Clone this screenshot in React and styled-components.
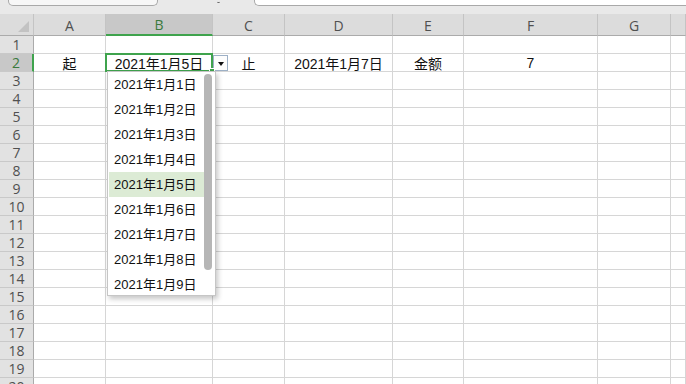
import React from 'react'
import styled, { createGlobalStyle } from 'styled-components'

const Global = createGlobalStyle`
  html, body { margin: 0; padding: 0; background: #fff; }
  body { font-family: "Liberation Sans", "Noto Sans CJK SC", sans-serif; }
`

const Page = styled.div`
  width: 686px;
  height: 384px;
  overflow: hidden;
  display: flex;
  flex-direction: column;
  background: #fff;
`

const TopBar = styled.div`
  height: 14px;
  flex: none;
  background: #e9e9e9;
  display: flex;
  align-items: flex-start;
`

const NameBox = styled.div`
  margin-left: 8px;
  width: 148px;
  height: 5px;
  background: #f7f7f7;
  border: 1px solid #a9a9a9;
  border-top: none;
  border-radius: 0 0 5px 5px;
`

const Chevron = styled.div`
  margin-left: 59px;
  width: 3px;
  height: 2px;
  border-bottom: 1px solid #666;
  border-radius: 0 0 2px 2px;
`

const FormulaBox = styled.div`
  margin-left: 34px;
  flex: 1;
  height: 5px;
  background: #fff;
  border: 1px solid #a9a9a9;
  border-top: none;
  border-right: none;
  border-radius: 0 0 0 5px;
`

const Sheet = styled.div`
  display: grid;
  grid-template-columns: 34px 72px 107px 72px 108px 71px 134px 73px 1fr;
  grid-template-rows: 22px repeat(20, 18px);
`

const Corner = styled.div`
  background: #dcdcdc;
  border-right: 1px solid #c4c4c4;
  border-bottom: 1px solid #ababab;
  position: relative;
  &::after {
    content: '';
    position: absolute;
    right: 4px;
    bottom: 3px;
    border-style: solid;
    border-width: 0 0 11px 11px;
    border-color: transparent transparent #c2c2c2 transparent;
  }
`

const ColHead = styled.div`
  background: ${p => (p.$active ? '#c8c8c8' : '#dcdcdc')};
  border-right: 1px solid #c4c4c4;
  border-bottom: ${p => (p.$active ? '2px solid #3fa34d' : '1px solid #ababab')};
  color: ${p => (p.$active ? '#3b7a3d' : '#505050')};
  font-family: "Open Sans", "Liberation Sans", sans-serif;
  font-size: 14px;
  display: flex;
  align-items: center;
  justify-content: center;
  padding-top: 1px;
`

const RowHead = styled.div`
  background: ${p => (p.$active ? '#c8c8c8' : '#e2e2e2')};
  border-right: ${p => (p.$active ? '2px solid #3fa34d' : '1px solid #ababab')};
  border-bottom: 1px solid #c9c9c9;
  color: ${p => (p.$active ? '#3b7a3d' : '#505050')};
  font-family: "Open Sans", "Liberation Sans", sans-serif;
  font-size: 14px;
  display: flex;
  align-items: center;
  justify-content: center;
`

const Cell = styled.div`
  border-right: 1px solid #d6d6d6;
  border-bottom: 1px solid #d6d6d6;
  font-family: "Liberation Sans", "Noto Sans CJK SC", sans-serif;
  font-size: 14px;
  color: #111;
  display: flex;
  align-items: center;
  justify-content: center;
  white-space: nowrap;
  position: relative;
  ${p => p.$selected && `
    z-index: 3;
    &::after {
      content: '';
      position: absolute;
      left: -1px;
      top: -1px;
      right: -1px;
      bottom: -1px;
      border: 2px solid #3fa34d;
      pointer-events: none;
    }
  `}
`

const FillHandle = styled.span`
  position: absolute;
  right: -3px;
  bottom: -3px;
  width: 4px;
  height: 4px;
  background: #3fa34d;
  border: 1px solid #fff;
  z-index: 4;
`

const DropButton = styled.div`
  position: absolute;
  right: -16px;
  top: 1px;
  width: 13px;
  height: 14px;
  background: #fdfdfd;
  border: 1px solid #9db0c6;
  display: flex;
  align-items: center;
  justify-content: center;
  &::after {
    content: '';
    border-style: solid;
    border-width: 4px 3.5px 0 3.5px;
    border-color: #111 transparent transparent transparent;
    margin-top: 1px;
  }
`

const Dropdown = styled.div`
  position: absolute;
  left: 1px;
  top: 17px;
  width: 109px;
  height: 225px;
  box-sizing: border-box;
  background: #fff;
  border: 1px solid #c6c6c6;
  box-shadow: 2px 3px 5px rgba(0, 0, 0, 0.22);
  display: flex;
  padding: 0 2px 0 1px;
  z-index: 5;
`

const List = styled.div`
  flex: 1;
  display: flex;
  flex-direction: column;
`

const Item = styled.div`
  height: 25px;
  box-sizing: border-box;
  flex: none;
  display: flex;
  align-items: center;
  padding: 0 0 3px 5px;
  font-family: "Liberation Sans", "Noto Sans CJK SC", sans-serif;
  font-size: 13px;
  color: #111;
  background: ${p => (p.$hl ? '#dcebd5' : 'transparent')};
`

const ScrollTrack = styled.div`
  width: 9px;
  flex: none;
  padding-top: 2px;
`

const Thumb = styled.div`
  width: 8px;
  height: 196px;
  background: #b6b6b6;
  border-radius: 4px;
`

const columns = ['A', 'B', 'C', 'D', 'E', 'F', 'G', '']
const row2 = ['起', '2021年1月5日', '止', '2021年1月7日', '金额', '7', '', '']
const days = [1, 2, 3, 4, 5, 6, 7, 8, 9]

export default function App() {
  const rows = Array.from({ length: 20 }, (_, i) => i + 1)
  return (
    <>
      <Global />
      <Page>
        <TopBar>
          <NameBox />
          <Chevron />
          <FormulaBox />
        </TopBar>
        <Sheet>
          <Corner />
          {columns.map((c, i) => (
            <ColHead key={'h' + i} $active={c === 'B'}>{c}</ColHead>
          ))}
          {rows.map(r => (
            <React.Fragment key={r}>
              <RowHead $active={r === 2}>{r}</RowHead>
              {columns.map((c, ci) => {
                if (r === 2 && c === 'B') {
                  return (
                    <Cell key={c} $selected>
                      {row2[ci]}
                      <FillHandle />
                      <DropButton />
                      <Dropdown>
                        <List>
                          {days.map(d => (
                            <Item key={d} $hl={d === 5}>2021年1月{d}日</Item>
                          ))}
                        </List>
                        <ScrollTrack>
                          <Thumb />
                        </ScrollTrack>
                      </Dropdown>
                    </Cell>
                  )
                }
                return <Cell key={c + ci}>{r === 2 ? row2[ci] : ''}</Cell>
              })}
            </React.Fragment>
          ))}
        </Sheet>
      </Page>
    </>
  )
}
